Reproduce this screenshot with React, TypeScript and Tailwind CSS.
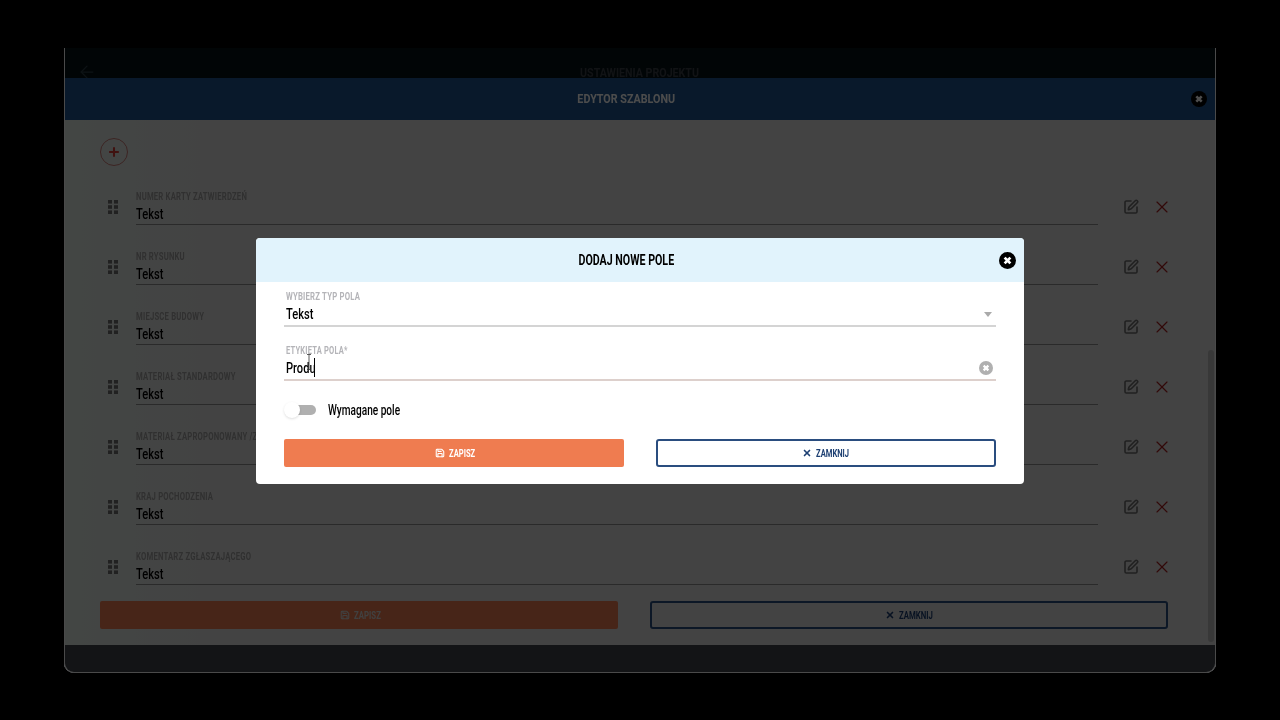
import { Plus, SquarePen, X, ArrowLeft, Save } from "lucide-react"

const fields = [
  "NUMER KARTY ZATWIERDZEŃ",
  "NR RYSUNKU",
  "MIEJSCE BUDOWY",
  "MATERIAŁ STANDARDOWY",
  "MATERIAŁ ZAPROPONOWANY /ZAMIENNIK",
  "KRAJ POCHODZENIA",
  "KOMENTARZ ZGŁASZAJĄCEGO",
]

// Oswald is not available, so text gets squeezed sideways
function Narrow({ children, className = "origin-left scale-x-[0.74]" }: { children: React.ReactNode; className?: string }) {
  return <span className={`inline-block whitespace-nowrap ${className}`}>{children}</span>
}

function CircleX({ className }: { className: string }) {
  return (
    <svg viewBox="0 0 16 16" className={className}>
      <circle cx="8" cy="8" r="8" fill="currentColor" />
      <path d="M5.3 5.3l5.4 5.4M10.7 5.3l-5.4 5.4" stroke="#fff" strokeWidth="2.6" />
    </svg>
  )
}

function DragDots() {
  return (
    <svg viewBox="0 0 10 14" className="h-[14px] w-[10px] text-[#707070]" fill="currentColor">
      <rect x="0" y="0" width="4" height="3.6" />
      <rect x="6" y="0" width="4" height="3.6" />
      <rect x="0" y="5.2" width="4" height="3.6" />
      <rect x="6" y="5.2" width="4" height="3.6" />
      <rect x="0" y="10.4" width="4" height="3.6" />
      <rect x="6" y="10.4" width="4" height="3.6" />
    </svg>
  )
}

function FieldRow({ label }: { label: string }) {
  return (
    <div className="flex h-[60px] items-center">
      <div className="w-[36px] pl-[8px]">
        <DragDots />
      </div>
      <div className="h-[36px] w-[962px] overflow-hidden border-b border-[#8c8c8c] pt-[1px]">
        <div className="h-[14px] text-[10px] font-bold leading-[14px] tracking-wide text-[#a0a0a0] blur-[0.5px]">
          <Narrow className="origin-left scale-x-[0.77]">{label}</Narrow>
        </div>
        <div className="h-[20px] text-[15px] font-medium leading-[20px] text-black">
          <Narrow>Tekst</Narrow>
        </div>
      </div>
      <div className="ml-[25px] flex items-center gap-[15px]">
        <SquarePen size={16} strokeWidth={2.4} className="text-[#6c6c6c]" />
        <X size={20} strokeWidth={1.4} className="-m-[2px] text-[#a82020]" />
      </div>
    </div>
  )
}

export default function App() {
  return (
    <div className="relative h-[720px] w-[1280px] overflow-hidden bg-black px-[64px] pt-[48px] font-['Roboto',sans-serif]">
      <div className="flex h-[625px] flex-col overflow-hidden rounded-b-[10px] bg-[#e2e2e2]">
        <header className="relative flex h-[30px] shrink-0 items-start justify-center bg-[#061117] pt-[20px] text-[13px] font-bold leading-[10px] text-[#3a4046]">
          <ArrowLeft size={20} strokeWidth={1.5} className="absolute left-[13px] top-[14px] text-[#2a3f45]" />
          <Narrow className="scale-x-[0.82]">USTAWIENIA PROJEKTU</Narrow>
        </header>
        <div className="relative flex h-[42px] shrink-0 items-center justify-center bg-[#20558f] pr-[28px] text-[13px] font-bold text-white">
          <Narrow className="scale-x-[0.825]">EDYTOR SZABLONU</Narrow>
          <CircleX className="absolute right-[9px] top-[13px] h-[16px] w-[16px] text-black" />
        </div>
        <main className="relative flex-1 bg-gradient-to-r from-[#e2eae4] to-[#e2e2e2] to-[12%] px-[36px]">
          <div className="h-[57px] pt-[18px]">
            <div className="flex h-[28px] w-[28px] items-center justify-center rounded-full border-[1.5px] border-[#c87a76]">
              <Plus size={14} strokeWidth={3.5} className="text-[#d83c38]" />
            </div>
          </div>
          {fields.map((f) => (
            <FieldRow key={f} label={f} />
          ))}
          <div className="mt-[4px] flex gap-[32px]">
            <button className="flex h-[28px] w-[518px] items-center justify-center gap-1 rounded-[2px] bg-[#ef7c50] pl-[6px] text-[10px] font-bold text-[#d8d8d8]">
              <Save size={10} strokeWidth={2.6} />
              <Narrow className="w-[30px] origin-left scale-x-[0.78]">ZAPISZ</Narrow>
            </button>
            <button className="flex h-[28px] w-[518px] items-center justify-center gap-1 rounded-[3px] border-2 border-[#2a4d7f] bg-[#e2e2e2] text-[10px] font-bold text-[#1d3f72]">
              <X size={10} strokeWidth={4} />
              <Narrow className="w-[34px] origin-left scale-x-[0.78]">ZAMKNIJ</Narrow>
            </button>
          </div>
          <div className="absolute bottom-[3px] right-[2px] top-[230px] w-[6px] rounded bg-[#bcbcbc]" />
        </main>
        <footer className="h-[28px] shrink-0 bg-[#42444a]" />
      </div>

      {/* dim layer and dialog */}
      <div className="absolute inset-x-[64px] bottom-[47px] top-[48px] rounded-b-[10px] border-x border-b border-[#4a4a4a] bg-black/70" />
      <div className="absolute inset-0 flex items-center justify-center pt-[2px]">
        <div className="h-[246px] w-[768px] overflow-hidden rounded-[4px] bg-white">
          <div className="relative flex h-[44px] items-center justify-center bg-[#e1f3fc] pr-[28px] text-[15px] font-bold text-black">
            <Narrow className="scale-x-[0.71]">DODAJ NOWE POLE</Narrow>
            <CircleX className="absolute right-[8px] top-[14px] h-[17px] w-[17px] text-black" />
          </div>
          <div className="px-[28px] pt-[8px]">
            <div className="h-[37px] border-b-2 border-[#d4d4d4]">
              <div className="h-[14px] pl-[2px] text-[10px] font-bold leading-[14px] tracking-wide text-[#b4b4b8]">
                <Narrow className="origin-left scale-x-[0.775]">WYBIERZ TYP POLA</Narrow>
              </div>
              <div className="relative h-[21px] pl-[2px] text-[15px] font-medium leading-[20px] text-black">
                <Narrow>Tekst</Narrow>
                <span className="absolute right-[4px] top-[8px] h-0 w-0 border-x-[4.5px] border-t-[5px] border-x-transparent border-t-[#aaa]" />
              </div>
            </div>
            <div className="relative mt-[17px] h-[37px] border-b-2 border-[#ddd0cc]">
              <div className="h-[14px] pl-[2px] text-[10px] font-bold leading-[14px] tracking-wide text-[#b4b4b8]">
                <Narrow className="origin-left scale-x-[0.755]">ETYKIETA POLA*</Narrow>
              </div>
              <div className="relative h-[21px] pl-[2px] text-[15px] font-medium leading-[20px] text-black">
                <Narrow>Produ</Narrow>
                <span className="absolute left-[30px] top-0 h-[19px] w-px bg-black" />
                <CircleX className="absolute right-[3px] top-[3px] h-[14px] w-[14px] text-[#b0b0b0]" />
              </div>
              {/* mouse pointer over the label */}
              <svg viewBox="0 0 6 16" className="absolute left-[22px] top-[10px] h-[16px] w-[6px] text-[#333]" fill="none" stroke="currentColor" strokeWidth="0.8">
                <path d="M1 .5h4M3 .5v15M1 15.5h4" />
              </svg>
            </div>
            <div className="mt-[19px] flex h-[20px] items-center">
              <div className="relative ml-[1px] h-[10px] w-[31px] rounded-full bg-[#b0b0b0]">
                <span className="absolute -left-[1px] -top-[3px] h-[16px] w-[16px] rounded-full bg-white shadow" />
              </div>
              <span className="ml-[12px] text-[14px] font-medium text-black">
                <Narrow className="origin-left scale-x-[0.72]">Wymagane pole</Narrow>
              </span>
            </div>
            <div className="mt-[19px] flex gap-[32px]">
              <button className="flex h-[28px] w-[340px] items-center justify-center gap-1 rounded-[2px] bg-[#ef7c50] pl-[4px] text-[10px] font-bold text-white">
                <Save size={10} strokeWidth={2.6} />
                <Narrow className="w-[28px] origin-left scale-x-[0.76]">ZAPISZ</Narrow>
              </button>
              <button className="flex h-[28px] w-[340px] items-center justify-center gap-1 rounded-[3px] border-2 border-[#2a4d7f] bg-white text-[10px] font-bold text-[#1d3f72]">
                <X size={10} strokeWidth={4} />
                <Narrow className="w-[34px] origin-left scale-x-[0.76]">ZAMKNIJ</Narrow>
              </button>
            </div>
          </div>
        </div>
      </div>
    </div>
  )
}
